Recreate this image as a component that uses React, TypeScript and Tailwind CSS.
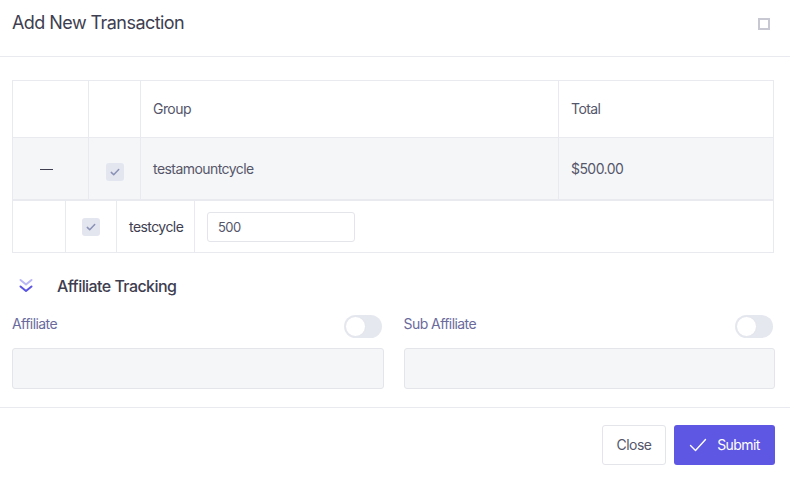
import React, { useState } from 'react';

const Checkbox = () => (
  <div className="w-[18px] h-[18px] rounded-[3px] bg-[#e3e6ef] flex items-center justify-center">
    <svg width="12" height="12" viewBox="0 0 12 12" fill="none">
      <path d="M2.3 6.4l2.4 2.3 5-5.2" stroke="#8a92b6" strokeWidth="1.5" strokeLinecap="round" strokeLinejoin="round" />
    </svg>
  </div>
);

const Toggle = ({ on, onClick }: { on: boolean; onClick: () => void }) => (
  <button
    onClick={onClick}
    className={`w-[38px] h-[23px] rounded-full flex items-center px-[1px] ${on ? 'bg-[#5e57e3] justify-end' : 'bg-[#e6e8f0] justify-start'}`}
  >
    <span className="w-[21px] h-[21px] rounded-full bg-white border border-[#e3e5ec]" />
  </button>
);

const App = () => {
  const [affiliateOn, setAffiliateOn] = useState(false);
  const [subAffiliateOn, setSubAffiliateOn] = useState(false);
  const [amount, setAmount] = useState('500');

  return (
    <div className="w-[790px] h-[479px] bg-white font-['Inter',sans-serif] tracking-[-0.035em] text-[#55566a] overflow-hidden">
      {/* Header */}
      <div className="h-[57px] border-b border-[#e9eaf0] flex items-start justify-between pl-3 pr-[20px] pt-[10px]">
        <h2 className="text-[18px] leading-[26px] text-[#3e3e50] font-normal">Add New Transaction</h2>
        <div className="mt-[8px] w-[12px] h-[12px] border-2 border-[#c7c8d2]" />
      </div>

      {/* Body */}
      <div className="pl-3 pr-[16px] pt-[23px]">
        <div className="border border-[#e9eaf0]">
          {/* Header row */}
          <div className="grid grid-cols-[76px_52px_418px_1fr] h-[56px] text-sm">
            <div className="border-r border-[#e9eaf0]" />
            <div className="border-r border-[#e9eaf0]" />
            <div className="border-r border-[#e9eaf0] flex items-center px-3">Group</div>
            <div className="flex items-center px-3">Total</div>
          </div>
          {/* Group row */}
          <div className="grid grid-cols-[76px_52px_418px_1fr] h-[62px] bg-[#f5f6f8] border-t border-[#e9eaf0] text-sm">
            <div className="border-r border-[#e9eaf0] flex items-center justify-center pr-[9px] pt-[1px]">
              <span className="block w-[13px] h-px bg-[#3e3e50]" />
            </div>
            <div className="border-r border-[#e9eaf0] flex items-center justify-center pt-[6px]">
              <Checkbox />
            </div>
            <div className="border-r border-[#e9eaf0] flex items-center px-3">testamountcycle</div>
            <div className="flex items-center px-3">$500.00</div>
          </div>
          {/* Nested row */}
          <div className="h-[53px] border-t-2 border-[#e9eaf0] flex text-sm text-[#3e3e50]">
            <div className="w-[53px] border-r border-[#e9eaf0]" />
            <div className="w-[51px] border-r border-[#e9eaf0] flex items-center justify-center">
              <Checkbox />
            </div>
            <div className="w-[78px] border-r border-[#e9eaf0] flex items-center px-3">testcycle</div>
            <div className="flex items-center px-3">
              <input
                value={amount}
                onChange={e => setAmount(e.target.value)}
                className="w-[148px] h-[30px] border border-[#e3e5ea] rounded-[3px] px-[10px] text-[13px] text-[#55566a] outline-none"
              />
            </div>
          </div>
        </div>

        {/* Affiliate tracking */}
        <div className="flex items-center mt-[23px] h-[20px]">
          <svg width="18" height="18" viewBox="0 0 18 18" fill="none" className="ml-[5px]">
            <path d="M3.5 3l5.5 4.5 5.5-4.5" stroke="#bab7f6" strokeWidth="2" strokeLinecap="round" strokeLinejoin="round" />
            <path d="M3.5 9.5l5.5 4.5 5.5-4.5" stroke="#5b55e2" strokeWidth="2" strokeLinecap="round" strokeLinejoin="round" />
          </svg>
          <span className="ml-[22px] text-[16px] font-medium text-[#3e3e50]">Affiliate Tracking</span>
        </div>

        <div className="grid grid-cols-2 gap-x-[20px] mt-[19px] -mr-[1px]">
          <div>
            <div className="flex items-start justify-between h-[23px] pr-[2px]">
              <span className="text-sm leading-[20px] -mt-px text-[#6a6a9c]">Affiliate</span>
              <Toggle on={affiliateOn} onClick={() => setAffiliateOn(!affiliateOn)} />
            </div>
            <input className="mt-[10px] w-full h-[41px] bg-[#f5f6f8] border border-[#e3e5ea] rounded-[3px] outline-none px-3 text-sm" />
          </div>
          <div>
            <div className="flex items-start justify-between h-[23px] pr-[2px]">
              <span className="text-sm leading-[20px] -mt-px text-[#6a6a9c]">Sub Affiliate</span>
              <Toggle on={subAffiliateOn} onClick={() => setSubAffiliateOn(!subAffiliateOn)} />
            </div>
            <input className="mt-[10px] w-full h-[41px] bg-[#f5f6f8] border border-[#e3e5ea] rounded-[3px] outline-none px-3 text-sm" />
          </div>
        </div>
      </div>

      {/* Footer */}
      <div className="mt-[18px] border-t border-[#e9eaf0] flex justify-end gap-2 pr-[15px] pt-[17px]">
        <button className="w-[64px] h-[40px] border border-[#e3e5ea] rounded-[3px] text-sm text-[#55566a]">Close</button>
        <button className="w-[101px] h-[40px] rounded-[3px] bg-[#5e57e3] text-white text-sm flex items-center justify-center gap-[10px]">
          <svg width="18" height="14" viewBox="0 0 18 14" fill="none">
            <path d="M1.5 7.5l5 5 10-11" stroke="white" strokeWidth="1.4" strokeLinecap="round" strokeLinejoin="round" />
          </svg>
          Submit
        </button>
      </div>
    </div>
  );
};

export default App;
